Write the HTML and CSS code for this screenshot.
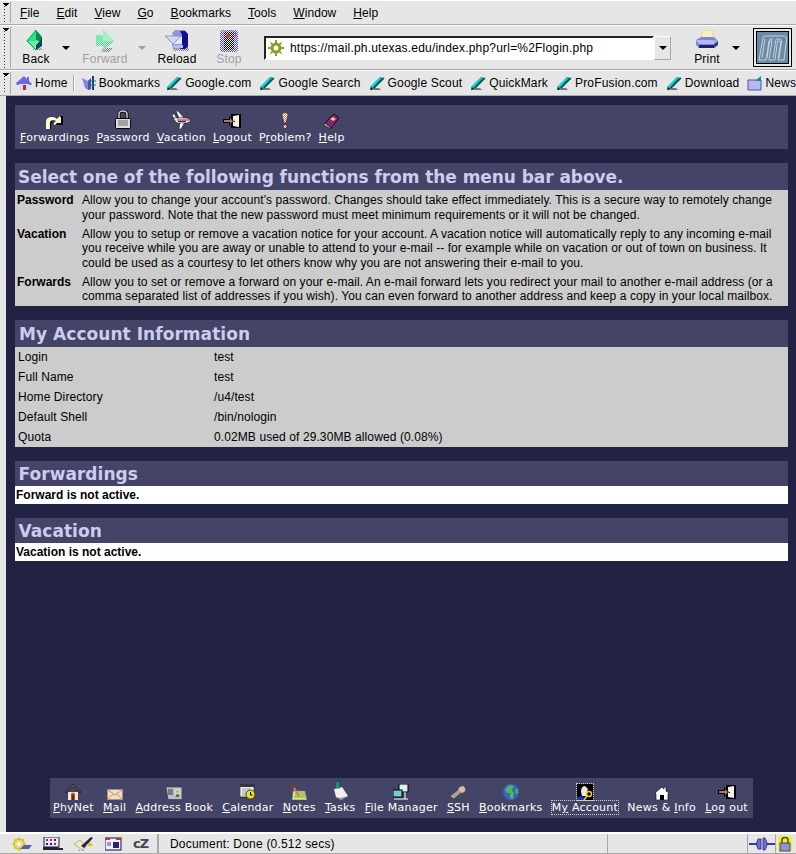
FILE: index.html
```html
<!DOCTYPE html>
<html lang="en">
<head>
<meta charset="utf-8">
<title>My Account</title>
<link rel="stylesheet" href="styles.css">
</head>
<body>
<svg class="defs" width="0" height="0">
  <defs>
    <pattern id="dGreen" width="2" height="2" patternUnits="userSpaceOnUse"><rect width="2" height="2" fill="#30f090"/><rect width="1" height="1" fill="#b0ffd8"/><rect x="1" y="1" width="1" height="1" fill="#b0ffd8"/></pattern>
    <pattern id="dFwd" width="2" height="2" patternUnits="userSpaceOnUse"><rect width="2" height="2" fill="#e6e6e6"/><rect width="1" height="1" fill="#40d890"/><rect x="1" y="1" width="1" height="1" fill="#40d890"/></pattern>
    <pattern id="dStop" width="2" height="2" patternUnits="userSpaceOnUse"><rect width="2" height="2" fill="#e6e6e6"/><rect width="1" height="1" fill="#5858b8"/><rect x="1" y="1" width="1" height="1" fill="#5858b8"/></pattern>
    <pattern id="dBlack" width="2" height="2" patternUnits="userSpaceOnUse"><rect width="2" height="2" fill="#e6e6e6"/><rect width="1" height="1" fill="#000"/><rect x="1" y="1" width="1" height="1" fill="#000"/></pattern>
    <pattern id="dPink" width="2" height="2" patternUnits="userSpaceOnUse"><rect width="2" height="2" fill="#fff0e0"/><rect width="1" height="1" fill="#e88070"/><rect x="1" y="1" width="1" height="1" fill="#e88070"/></pattern>
    <pattern id="dShadow" width="2" height="2" patternUnits="userSpaceOnUse"><rect width="1" height="1" fill="#777"/><rect x="1" y="1" width="1" height="1" fill="#777"/></pattern>
  </defs>
  <symbol id="pen" viewBox="0 0 17 16">
    <path d="M1 15h11l-2-2H3z" fill="#777"/>
    <path d="M1 12 11 2l4 1-10 10-3 2z" fill="#0a8f96"/>
    <path d="M1 12 11 2l1 1L2 14z" fill="#12e0e0"/>
    <path d="M1 15l1-3 2 2z" fill="#111"/>
    <path d="M5 13 15 3" stroke="#063f48" stroke-width="1.2" fill="none"/>
  </symbol>
  <symbol id="door" viewBox="0 0 18 16">
    <path d="M8 1h10v14H8z" fill="#000"/>
    <path d="M10 3l6-1v12l-6-1z" fill="#f4f0ea"/>
    <rect x="11" y="8" width="1" height="1" fill="#000"/>
    <path d="M0 6h6V3l5 5-5 5v-3H0z" fill="#000"/>
    <path d="M1 7h6V5l3 3-3 3V9H1z" fill="#b07878"/>
  </symbol>
</svg>

<header class="chrome">
  <nav class="bar menubar">
    <span class="grip"></span>
    <span class="menu"><u>F</u>ile</span>
    <span class="menu"><u>E</u>dit</span>
    <span class="menu"><u>V</u>iew</span>
    <span class="menu"><u>G</u>o</span>
    <span class="menu"><u>B</u>ookmarks</span>
    <span class="menu"><u>T</u>ools</span>
    <span class="menu"><u>W</u>indow</span>
    <span class="menu"><u>H</u>elp</span>
  </nav>
  <div class="bar toolbar">
    <span class="grip"></span>
    <div class="tool tool-back">
      <svg width="20" height="22" viewBox="0 0 20 22"><path d="M6 20h12l-4-2H8z" fill="url(#dShadow)"/><path d="M10 0 1 11l9 9 6-4V7z" fill="url(#dGreen)"/><path d="M10 0 1 11h9z" fill="#20e880"/><path d="M10 0l6 7v5l-6-2z" fill="#0e8a4a"/><path d="M16 7v9l-6 4v-5l3-3z" fill="#0a4a50"/><path d="M10 0 1 11l9 9" fill="none" stroke="#0a9a50"/></svg>
      <span>Back</span>
    </div>
    <span class="caret caret-back"></span>
    <div class="tool tool-forward off">
      <svg width="20" height="22" viewBox="0 0 20 22"><path d="M8 18h10l-4 4H6z" fill="url(#dShadow)"/><path d="M8 0v5H1v11h7v5l11-10z" fill="url(#dFwd)"/><path d="M8 0l11 11H8z" fill="#a8f0cc"/><path d="M1 5h7v6H1z" fill="#80e8b4"/></svg>
      <span>Forward</span>
    </div>
    <span class="caret caret-forward off"></span>
    <div class="tool tool-reload">
      <svg width="24" height="22" viewBox="0 0 24 22"><path d="M7 18h17v3H9z" fill="url(#dShadow)"/><path d="M7 3l3-3h10l3 4v13l-3 2H9l-2-3V14h13V7H9z" fill="#9098e0"/><path d="M15 1h5l3 3v13l-3 2h-5l2-2V5z" fill="#10108a"/><path d="M0 6h15v1l-7 7z" fill="#d4d8f4" stroke="#7078c0" stroke-width=".7"/><path d="M8 15h10v3H9z" fill="#b8bcec"/></svg>
      <span>Reload</span>
    </div>
    <div class="tool tool-stop off">
      <svg width="20" height="22" viewBox="0 0 20 22"><rect x="1" y="0" width="18" height="22" rx="3" fill="url(#dStop)"/><rect x="5" y="2" width="10" height="18" fill="url(#dBlack)"/><circle cx="9" cy="6" r="2" fill="#f03030"/><rect x="16" y="3" width="1" height="3" fill="#f03030"/></svg>
      <span>Stop</span>
    </div>
    <div class="urlbox">
      <div class="urlfield">
        <svg width="16" height="16" viewBox="0 0 16 16"><g fill="#8aa020"><circle cx="8" cy="8" r="5.500"/><path d="M7 0h2v16H7zM0 7h16v2H0zM2 3l1-1 11 11-1 1zM13 2l1 1L3 14l-1-1z"/></g><circle cx="8" cy="8" r="2.500" fill="#fff"/></svg>
        <span class="urltext">https://mail.ph.utexas.edu/index.php?url=%2Flogin.php</span>
      </div>
      <span class="urldrop"><span class="caret"></span></span>
    </div>
    <div class="tool tool-print">
      <svg class="printicon" width="24" height="20" viewBox="0 0 24 20"><path d="M7 0h11l2 8H6z" fill="#ece08c"/><path d="M8 2h9M8 4h9M8 6h10" stroke="#fff"/><path d="M1 10l5-3h13l4 4v4l-4 3H4l-3-3z" fill="#7e84e0"/><path d="M1 10h16l6 1-4 3H4z" fill="#b4b8f0"/><path d="M4 15h15v3H4z" fill="#20206a"/><path d="M19 14l4-3v4l-4 3z" fill="#404090"/></svg>
      <span>Print</span>
    </div>
    <span class="caret caret-print"></span>
    <div class="throbber">
      <svg width="30" height="26" viewBox="0 0 30 26"><path d="M1 25 5 3q.3-2 2-2h18q4 0 3.500 4L26 25h-6l2.500-17q.2-2-1.500-2h-1.500L17 25h-6l3-19h-3L8 25zM4 23 7 4M9 23l3-19h3M15 23l3-19h3q3 0 2.500 3L21 23" fill="none" stroke="#c0d2e0" stroke-width="1"/></svg>
    </div>
  </div>
  <div class="bar personal">
    <span class="grip"></span>
    <div class="plink link-home">
      <svg width="16" height="16" viewBox="0 0 16 16"><path d="M0 8 8 1l3 3V2h2v4l3 3-1 1H1z" fill="#6a6ae0"/><path d="M3 9h10v6H3z" fill="#d8d8f4"/><path d="M7 10h3v5H7z" fill="#a33"/></svg>
      <span>Home</span>
    </div>
    <span class="psep"></span>
    <div class="plink link-marks">
      <svg width="16" height="16" viewBox="0 0 16 16"><path d="M1 3l6 3 3-3v11l-3 1-3-2z" fill="#8a80e8"/><path d="M7 6l3-3v11l-3 1z" fill="#5050a0"/><path d="M12 1v14" stroke="#146" stroke-width="2"/><path d="M9 6h6M9 10h6" stroke="#0a7a70"/></svg>
      <span>Bookmarks</span>
    </div>
    <div class="plink"><svg width="17" height="16"><use href="#pen"/></svg><span>Google.com</span></div>
    <div class="plink"><svg width="17" height="16"><use href="#pen"/></svg><span>Google Search</span></div>
    <div class="plink"><svg width="17" height="16"><use href="#pen"/></svg><span>Google Scout</span></div>
    <div class="plink"><svg width="17" height="16"><use href="#pen"/></svg><span>QuickMark</span></div>
    <div class="plink"><svg width="17" height="16"><use href="#pen"/></svg><span>ProFusion.com</span></div>
    <div class="plink"><svg width="17" height="16"><use href="#pen"/></svg><span>Download</span></div>
    <div class="plink">
      <svg width="16" height="16" viewBox="0 0 16 16"><path d="M1 5h13v10H1z" fill="#b8b8f0" stroke="#5050a0"/><path d="M8 6l6-5v5z" fill="#0a8f96"/></svg>
      <span>News</span>
    </div>
  </div>
</header>

<main class="page">
  <nav class="iconnav topnav">
    <a class="navitem">
      <svg width="18" height="14" viewBox="0 0 18 14"><path d="M0 14V7q0-5 6-5 3 0 5 2l3-3h3v9h-9V8l2-2q-1-1-3-1-3 0-3 3v6z" fill="#ffffd0"/><path d="M14 1h3v9H9l2-2h4V3zM6 6q-2 0-2 3v5h1V9q0-2 2-2z" fill="#000"/></svg>
      <span><u>F</u>orwardings</span>
    </a>
    <a class="navitem">
      <svg width="16" height="19" viewBox="0 0 16 19"><path d="M4 8V4q0-3 4-3t4 3v4" fill="none" stroke="#000" stroke-width="3"/><path d="M4 8V4q0-3 4-3t4 3v4" fill="none" stroke="#ccc" stroke-width="1.500"/><rect x=".5" y="8.500" width="15" height="10" rx="1" fill="#ddd" stroke="#000"/><path d="M3 11h10M3 13h10M3 15h10" stroke="#666"/></svg>
      <span><u>P</u>assword</span>
    </a>
    <a class="navitem">
      <svg width="18" height="18" viewBox="0 0 18 18"><path d="M4 0h2l6 7H7zM0 3h2l3 4H1zM8 11h5l-4 7H7z" fill="#fff" stroke="#000" stroke-width=".5"/><path d="M1 7h13q4 0 4 2.500T14 12H5z" fill="#fff" stroke="#000" stroke-width=".5"/><path d="M5 9h12" stroke="#e02020" stroke-width="1.200"/><path d="M6 10.500h8" stroke="#2020a0" stroke-width="1.200"/></svg>
      <span><u>V</u>acation</span>
    </a>
    <a class="navitem">
      <svg width="18" height="16"><use href="#door"/></svg>
      <span><u>L</u>ogout</span>
    </a>
    <a class="navitem">
      <svg width="8" height="17" viewBox="0 0 8 17"><path d="M1 3q0-2.500 3-2.500T7 3L5 11H3z" fill="url(#dPink)" stroke="#322" stroke-width=".6"/><circle cx="4" cy="14.500" r="2" fill="url(#dPink)" stroke="#322" stroke-width=".6"/></svg>
      <span>P<u>r</u>oblem?</span>
    </a>
    <a class="navitem">
      <svg width="16" height="16" viewBox="0 0 16 16"><path d="M1 10 10 1l5 4-8 10z" fill="#80208a" stroke="#000" stroke-width=".8"/><path d="M1 10l6 5v1l-7-4z" fill="#eadcb0" stroke="#000" stroke-width=".6"/><path d="M6 6l3-2 3 2-3 2z" fill="#f4d040"/></svg>
      <span><u>H</u>elp</span>
    </a>
  </nav>

  <section class="panel">
    <h1 class="phead h-large">Select one of the following functions from the menu bar above.</h1>
    <dl class="defs-list">
      <div class="defrow">
        <dt>Password</dt>
        <dd>Allow you to change your account's password. Changes should take effect immediately. This is a secure way to remotely change your password. Note that the new password must meet minimum requirements or it will not be changed.</dd>
      </div>
      <div class="defrow">
        <dt>Vacation</dt>
        <dd>Allow you to setup or remove a vacation notice for your account. A vacation notice will automatically reply to any incoming e-mail you receive while you are away or unable to attend to your e-mail -- for example while on vacation or out of town on business. It could be used as a courtesy to let others know why you are not answering their e-mail to you.</dd>
      </div>
      <div class="defrow">
        <dt>Forwards</dt>
        <dd>Allow you to set or remove a forward on your e-mail. An e-mail forward lets you redirect your mail to another e-mail address (or a comma separated list of addresses if you wish). You can even forward to another address and keep a copy in your local mailbox.</dd>
      </div>
    </dl>
  </section>

  <section class="panel">
    <h2 class="phead h-med">My Account Information</h2>
    <div class="info">
      <div class="inforow"><span>Login</span><span>test</span></div>
      <div class="inforow"><span>Full Name</span><span>test</span></div>
      <div class="inforow"><span>Home Directory</span><span>/u4/test</span></div>
      <div class="inforow"><span>Default Shell</span><span>/bin/nologin</span></div>
      <div class="inforow"><span>Quota</span><span>0.02MB used of 29.30MB allowed (0.08%)</span></div>
    </div>
  </section>

  <section class="panel">
    <h2 class="phead h-small">Forwardings</h2>
    <p class="notice">Forward is not active.</p>
  </section>

  <section class="panel">
    <h2 class="phead h-small">Vacation</h2>
    <p class="notice">Vacation is not active.</p>
  </section>

  <nav class="iconnav botnav">
    <a class="navitem">
      <svg width="16" height="16" viewBox="0 0 16 16"><path d="M3 8h10v8H3z" fill="#f0e8d8"/><path d="M0 8 8 0l8 8-1 1-7-6-7 6z" fill="#555" stroke="#000" stroke-width=".5"/><path d="M6 16v-6q2-3 4 0v6z" fill="#c05010"/><path d="M7.500 11h1v5h-1z" fill="#000"/></svg>
      <span><u>P</u>hyNet</span>
    </a>
    <a class="navitem">
      <svg width="16" height="11" viewBox="0 0 16 11"><rect x=".5" y=".5" width="15" height="10" fill="#f4dcc0" stroke="#a89078"/><path d="M1 1l7 5 7-5M1 10l5-5M15 10l-5-5" fill="none" stroke="#b09a80"/></svg>
      <span><u>M</u>ail</span>
    </a>
    <a class="navitem">
      <svg width="16" height="14" viewBox="0 0 16 14"><path d="M0 1h16v12l-1 1-1-1-1 1-1-1-1 1-1-1-1 1-1-1-1 1-1-1-1 1-1-1-1 1-1-1z" fill="#b8c0c8" stroke="#223" stroke-width=".5"/><path d="M2 4h5M2 6h5M2 8h5" stroke="#334"/><rect x="9" y="3" width="5" height="8" fill="#d8e0d0"/><circle cx="11.500" cy="5.500" r="1.500" fill="#d8a070"/><path d="M9.500 11q0-3 2-3t2 3z" fill="#408040"/></svg>
      <span><u>A</u>ddress Book</span>
    </a>
    <a class="navitem">
      <svg width="16" height="16" viewBox="0 0 16 16"><rect y="0" width="14" height="13" fill="#f0f0f0" stroke="#000" stroke-width=".6"/><path d="M0 0h14v3H0z" fill="#334"/><path d="M2 5h9M2 7h7M2 9h6M2 11h6" stroke="#99a"/><circle cx="10.500" cy="10.500" r="4.500" fill="#e8e030" stroke="#540"/><path d="M10.500 8v3h2" stroke="#000" fill="none"/></svg>
      <span><u>C</u>alendar</span>
    </a>
    <a class="navitem">
      <svg width="16" height="15" viewBox="0 0 16 15"><path d="M2 6h12l2 9H1z" fill="#d8ec80" stroke="#6060b0" stroke-width=".6"/><path d="M4 8h10M4 10h11M3 12h12" stroke="#8aa040"/><path d="M1 0l7 11" stroke="#d0863c" stroke-width="2"/><path d="M1 0l2 3" stroke="#a02020" stroke-width="2"/></svg>
      <span><u>N</u>otes</span>
    </a>
    <a class="navitem">
      <svg width="16" height="18" viewBox="0 0 16 18"><path d="M2 7l8-2 6 9-7 4-5-3z" fill="#f0f0f0"/><path d="M4 15l5 3 7-4-7 2z" fill="#889"/><path d="M4 0h4l-1 3 1 3H3l1-3z" fill="#14a090" stroke="#053" stroke-width=".6"/></svg>
      <span><u>T</u>asks</span>
    </a>
    <a class="navitem">
      <svg width="16" height="16" viewBox="0 0 16 16"><rect x="6" y="0" width="9" height="8" fill="#d8f0f0" stroke="#000"/><rect x="0" y="6" width="9" height="7" fill="#70d0d0" stroke="#000"/><path d="M1 15h14M12 8v7" stroke="#fff"/></svg>
      <span><u>F</u>ile Manager</span>
    </a>
    <a class="navitem">
      <svg width="16" height="14" viewBox="0 0 16 14"><path d="M0 10l9-7 2 4-7 6-2-1z" fill="#a0a488" stroke="#223" stroke-width=".5"/><path d="M8 3q2-3 5-3 3 2 2 5-1 2-4 2z" fill="#e8b4a0"/></svg>
      <span><u>S</u>SH</span>
    </a>
    <a class="navitem">
      <svg width="16" height="16" viewBox="0 0 16 16"><circle cx="8" cy="8" r="8" fill="#3068c0"/><path d="M2 6l4-5 5 1-2 4 2 3-1 6-3-1V9H4zM12 4l3 2v3l-2 1z" fill="#58b060"/></svg>
      <span><u>B</u>ookmarks</span>
    </a>
    <a class="navitem current">
      <svg class="curicon" width="16" height="16" viewBox="0 0 16 16"><rect width="16" height="16" fill="#000"/><path d="M4 8q0-6 4-6l3 3-2 5v2H5z" fill="#f4e8dc"/><path d="M0 16v-3l5-1 4 4z" fill="#1838b0"/><circle cx="12" cy="10" r="2.500" fill="none" stroke="#f0d020" stroke-width="1.500"/><path d="M10 12l-3 4" stroke="#f0d020" stroke-width="1.500"/></svg>
      <span class="curlabel">M<u>y</u> Account</span>
    </a>
    <a class="navitem">
      <svg width="14" height="14" viewBox="0 0 14 14"><path d="M0 7l7-6 2 2V1h2v4l3 2-1 1v6H1V8z" fill="#fff" stroke="#000" stroke-width=".6"/><path d="M5 14V9h4v5z" fill="#000"/></svg>
      <span>News &amp; <u>I</u>nfo</span>
    </a>
    <a class="navitem">
      <svg width="18" height="16"><use href="#door"/></svg>
      <span><u>L</u>og out</span>
    </a>
  </nav>
</main>

<footer class="status">
  <div class="st-icons">
    <svg width="22" height="14" viewBox="0 0 22 14"><circle cx="9" cy="7" r="5" fill="none" stroke="#d8c810" stroke-width="2"/><path d="M9 0v14M2 7h14M4 2l10 10M14 2 4 12" stroke="#d8c810"/><circle cx="9" cy="7" r="2" fill="#fff"/><path d="M10 12l4-4h8l-3 4z" fill="#5a5ab0"/></svg>
    <svg width="20" height="14" viewBox="0 0 20 14"><rect x="1" y="0" width="15" height="10" fill="#e8e8f8" stroke="#223"/><path d="M3 2h2v2H3zM7 2h2v2H7zM11 6h2v2h-2z" fill="#d02020"/><path d="M7 6h2v2H7zM3 6h2v2H3zM11 2h2v2h-2z" fill="#2020b0"/><path d="M0 10h15l1 1h4v2H0z" fill="#223"/></svg>
    <svg width="20" height="14" viewBox="0 0 20 14"><path d="M0 7l6-4 6 7-4 3z" fill="#eeeeb8" stroke="#888" stroke-width=".6"/><path d="M7 9l10-9 2 1-9 10z" fill="#225"/><path d="M12 8l4-3 3 4h-5z" fill="#d8c810"/><path d="M4 14h2M8 14h2" stroke="#c22"/></svg>
    <svg width="17" height="14" viewBox="0 0 17 14"><rect y="1" width="16" height="12" fill="#f0f0fc" stroke="#113"/><path d="M0 1h5v2h6V1h5v2H0z" fill="#c33"/><rect x="8" y="5" width="6" height="6" fill="#227"/><path d="M2 6h4M2 8h4" stroke="#447"/></svg>
    <span class="czlogo">cZ</span>
  </div>
  <div class="st-text">Document: Done (0.512 secs)</div>
  <div class="st-fill"></div>
  <div class="st-conn">
    <svg width="26" height="14" viewBox="0 0 26 14"><path d="M0 7h8M18 7h8" stroke="#3838a0" stroke-width="2"/><path d="M9 2q-3 5 0 10h3V2zM14 1h2q4 6 0 12h-2z" fill="#7070d0" stroke="#228" stroke-width=".8"/></svg>
  </div>
  <div class="st-lock">
    <svg width="14" height="16" viewBox="0 0 14 16"><rect width="14" height="16" rx="3" fill="#f4f020"/><path d="M4 7V4q0-2.500 3-2.500T10 4v3" fill="none" stroke="#446" stroke-width="1.500"/><rect x="2" y="7" width="10" height="8" fill="#9090e0" stroke="#335" stroke-width=".8"/></svg>
  </div>
</footer>
</body>
</html>
```
FILE: styles.css
```css
* { box-sizing: border-box; }
html, body { height: 100%; margin: 0; }
body {
  height: 854px;
  overflow: hidden;
  display: flex;
  flex-direction: column;
  background: #e6e6e6;
  font-family: "Liberation Sans", Arial, sans-serif;
  font-size: 12px;
  color: #000;
}
.defs { position: absolute; }
svg { display: block; flex: none; }

.chrome { flex: none; }
.bar {
  display: flex;
  align-items: center;
  border-bottom: 1px solid #a8a8a8;
  border-top: 1px solid #fff;
  background: #e6e6e6;
}
.grip {
  flex: none;
  align-self: stretch;
  width: 11px;
  margin: 1px 0;
  position: relative;
  border-right: 1px solid #a8a8a8;
  background:
    linear-gradient(#000 0 0) 3px 1px / 6px 1px no-repeat,
    linear-gradient(#000 0 0) 4px 2px / 4px 1px no-repeat,
    linear-gradient(#000 0 0) 5px 3px / 2px 1px no-repeat,
    radial-gradient(circle, #334 0 .7px, transparent 1px) 3px 6px / 3px 3px repeat-y;
}

.menubar { height: 25px; letter-spacing: .05px; }
.menu:nth-of-type(2) { margin-left: 9px; }
.menubar .menu + .menu { margin-left: 17px; }

.toolbar { height: 45px; }
.tool {
  display: flex;
  flex-direction: column;
  align-items: center;
  width: 40px;
  gap: 0;
  letter-spacing: .2px;
  line-height: 14px;
  flex: none;
}
.tool svg { height: 22px; }
.off { color: #a0a0a0; }
.tool-back { margin-left: 5px; }
.caret {
  display: block;
  width: 0;
  height: 0;
  flex: none;
  border: 4px solid transparent;
  border-top: 4px solid #000;
  border-bottom: 0;
}
.caret.off { border-top-color: #a0a0a0; }
.caret-back { margin-left: 6px; }
.tool-forward { margin-left: 10px; width: 50px; }
.caret-forward { margin-left: 8px; }
.tool-reload { margin-left: 9px; width: 44px; }
.tool-stop { margin-left: 10px; }
.urlbox { display: flex; margin-left: 15px; height: 24px; }
.urlfield {
  width: 390px;
  background: #fff;
  border: 2px solid;
  border-color: #222 #fff #fff #222;
  display: flex;
  align-items: center;
  gap: 6px;
  padding-left: 2px;
  letter-spacing: .2px;
}
.urltext { white-space: nowrap; }
.urldrop {
  width: 17px;
  border: 1px solid #a8a8a8;
  border-top-color: #fff;
  border-left-color: #fff;
  display: flex;
  align-items: center;
  justify-content: center;
}
.tool-print { margin-left: 16px; width: 40px; }
.tool .printicon { height: 20px; margin-bottom: 2px; }
.caret-print { margin-left: 5px; }
.throbber {
  margin-left: 13px;
  width: 39px;
  height: 39px;
  background: #6a8aa4;
  border: 1px solid #000;
  box-shadow: inset 0 0 0 2px #e8e8e8, inset 0 0 0 3px #000;
  display: flex;
  align-items: center;
  justify-content: center;
  flex: none;
}

.personal { height: 26px; white-space: nowrap; overflow: hidden; letter-spacing: .16px; }
.plink { display: flex; align-items: center; gap: 2px; flex: none; margin-left: 8px; }
.link-home { margin-left: 5px; gap: 3px; }
.psep { flex: none; width: 2px; height: 16px; margin-left: 5px; background: #a8a8a8; border-right: 1px solid #fff; }
.link-marks { margin-left: 6px; margin-right: -2px; }

.page {
  flex: 1;
  min-height: 0;
  margin-left: 6px;
  background: #222244;
  padding: 9px 8px 14px 9px;
  display: flex;
  flex-direction: column;
  align-items: stretch;
}
.iconnav {
  display: flex;
  background: #444466;
  color: #fff;
  font-family: "DejaVu Sans", Verdana, sans-serif;
  font-size: 11px;
  letter-spacing: .23px;
}
.navitem { display: flex; flex-direction: column; align-items: center; justify-content: flex-end; flex: none; }
.navitem span { line-height: 13px; white-space: nowrap; }
.topnav { height: 44px; padding: 4px 5px 5px; gap: 7px; }
.topnav .navitem { height: 35px; }
.topnav svg { margin-bottom: 2px; }
.botnav { margin-top: auto; align-self: center; height: 40px; padding: 3px 5px 4px 3px; gap: 9px; width: 703px; justify-content: space-between; }
.botnav .navitem { height: 33px; }
.botnav svg { margin-bottom: 1px; }
.curlabel { outline: 1px dotted #ccc; }
.curicon { outline: 1px dotted #cca; }

.panel { margin-top: 14px; }
.phead {
  margin: 0;
  background: #444466;
  color: #ccccee;
  font-family: "DejaVu Sans", Verdana, sans-serif;
  font-weight: bold;
  padding-left: 4px;
  white-space: nowrap;
}
.h-large { font-size: 17px; height: 27px; line-height: 28px; letter-spacing: -.06px; padding-left: 3px; }
.h-med { font-size: 17px; height: 27px; line-height: 28px; letter-spacing: .05px; }
.h-small { font-size: 17px; height: 25px; line-height: 26px; letter-spacing: .05px; padding-left: 3.500px; }

.defs-list { margin: 0; background: #cccccc; padding: 3px 3px 2.500px 2px; }
.defrow { display: flex; margin-bottom: 4.500px; }
.defrow:last-child { margin-bottom: 0; }
.defrow dt { flex: none; width: 65px; font-weight: bold; line-height: 15px; }
.defrow dd { margin: 0; line-height: 14.500px; letter-spacing: .07px; }

.info { background: #cccccc; }
.inforow { display: grid; grid-template-columns: 196px 1fr; height: 20px; line-height: 21px; padding-left: 3px; letter-spacing: .1px; }

.notice { margin: 0; height: 18px; line-height: 18px; background: #fff; font-weight: bold; padding-left: 1px; }

.status {
  flex: none;
  height: 22px;
  display: flex;
  align-items: stretch;
  border-top: 2px solid #fff;
  border-bottom: 1px solid #a8a8a8;
  letter-spacing: .2px;
}
.st-icons {
  flex: none;
  width: 159px;
  padding-left: 10px;
  display: flex;
  align-items: center;
  gap: 11px;
  border-right: 2px solid #a8a8a8;
}
.czlogo { font-family: "DejaVu Sans", Verdana, sans-serif; font-weight: bold; font-size: 13px; color: #445; letter-spacing: -1px; }
.st-text { flex: none; width: 449px; padding-left: 11px; line-height: 20px; border-right: 1px solid #a8a8a8; }
.st-fill { flex: 1; border-right: 1px solid #a8a8a8; }
.st-conn { flex: none; width: 28px; display: flex; align-items: center; justify-content: center; border-right: 1px solid #a8a8a8; }
.st-lock { flex: none; width: 20px; padding-left: 2px; display: flex; align-items: center; }
```
